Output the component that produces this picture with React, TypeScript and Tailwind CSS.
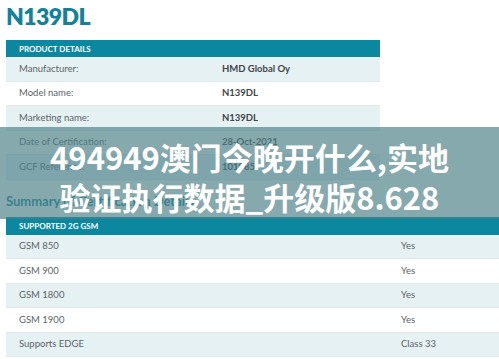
const productRows = [
  { label: 'Manufacturer:', value: 'HMD Global Oy' },
  { label: 'Model name:', value: 'N139DL' },
  { label: 'Marketing name:', value: 'N139DL' },
  { label: 'Date of Certification:', value: '28-Oct-2021' },
  { label: 'GCF Reference:', value: '101985' },
]

const gsmRows = [
  { label: 'GSM 850', value: 'Yes' },
  { label: 'GSM 900', value: 'Yes' },
  { label: 'GSM 1800', value: 'Yes' },
  { label: 'GSM 1900', value: 'Yes' },
  { label: 'Supports EDGE', value: 'Class 33' },
]

export default function App() {
  return (
    <main
      className="relative h-[359px] w-[499px] overflow-hidden bg-white text-[#5b6366]"
      style={{ fontFamily: 'Lato, "Open Sans", sans-serif' }}
    >
      <div className="pl-[6px]">
        <h1 className="pt-[1px] text-[23px] font-extrabold leading-[30px] tracking-[-0.6px] text-[#13819a]">
          N139DL
        </h1>

        <section className="mt-[9px] w-[374px]">
          <div className="flex h-[17px] items-center bg-[#0b87a0] pl-[13px] text-[8px] font-bold uppercase text-white">
            Product Details
          </div>
          {productRows.map((row, i) => (
            <div
              key={row.label}
              className={`flex h-[24.5px] items-center border-b border-[#e3e9eb] text-[9.5px] ${
                i % 2 === 0 ? 'bg-[#e6f1f4]' : 'bg-white'
              }`}
            >
              <span className="w-[216px] pl-[13px]">{row.label}</span>
              <span className="font-bold text-[#3f4548]">{row.value}</span>
            </div>
          ))}
        </section>

        <h2 className="mt-[11px] text-[13px] font-bold leading-[20px] text-[#13819a]">
          Summary of Certification Details
        </h2>

        <section className="mt-[6px]">
          <div className="flex h-[18px] items-center bg-[#0b87a0] pl-[13px] text-[8px] font-bold uppercase text-white">
            Supported 2G GSM
          </div>
          {gsmRows.map((row, i) => (
            <div
              key={row.label}
              className={`flex h-[24.5px] items-center border-b border-[#e3e9eb] text-[9.5px] ${
                i % 2 === 0 ? 'bg-[#e6f1f4]' : 'bg-white'
              }`}
            >
              <span className="w-[395px] pl-[13px]">{row.label}</span>
              <span>{row.value}</span>
            </div>
          ))}
        </section>
      </div>

      {/* caption banner laid over the page */}
      <div className="absolute inset-x-0 top-[127px] flex h-[92px] flex-col items-center justify-center bg-[rgba(76,128,136,0.68)] pt-[7px]">
        <p
          className="text-[31px] font-bold leading-[40px] text-white"
          style={{ fontFamily: '"Noto Sans CJK SC", "Noto Sans", sans-serif' }}
        >
          494949澳门今晚开什么,实地
        </p>
        <p
          className="text-[31px] font-bold leading-[40px] text-white"
          style={{ fontFamily: '"Noto Sans CJK SC", "Noto Sans", sans-serif' }}
        >
          验证执行数据_升级版8.628
        </p>
      </div>
    </main>
  )
}
